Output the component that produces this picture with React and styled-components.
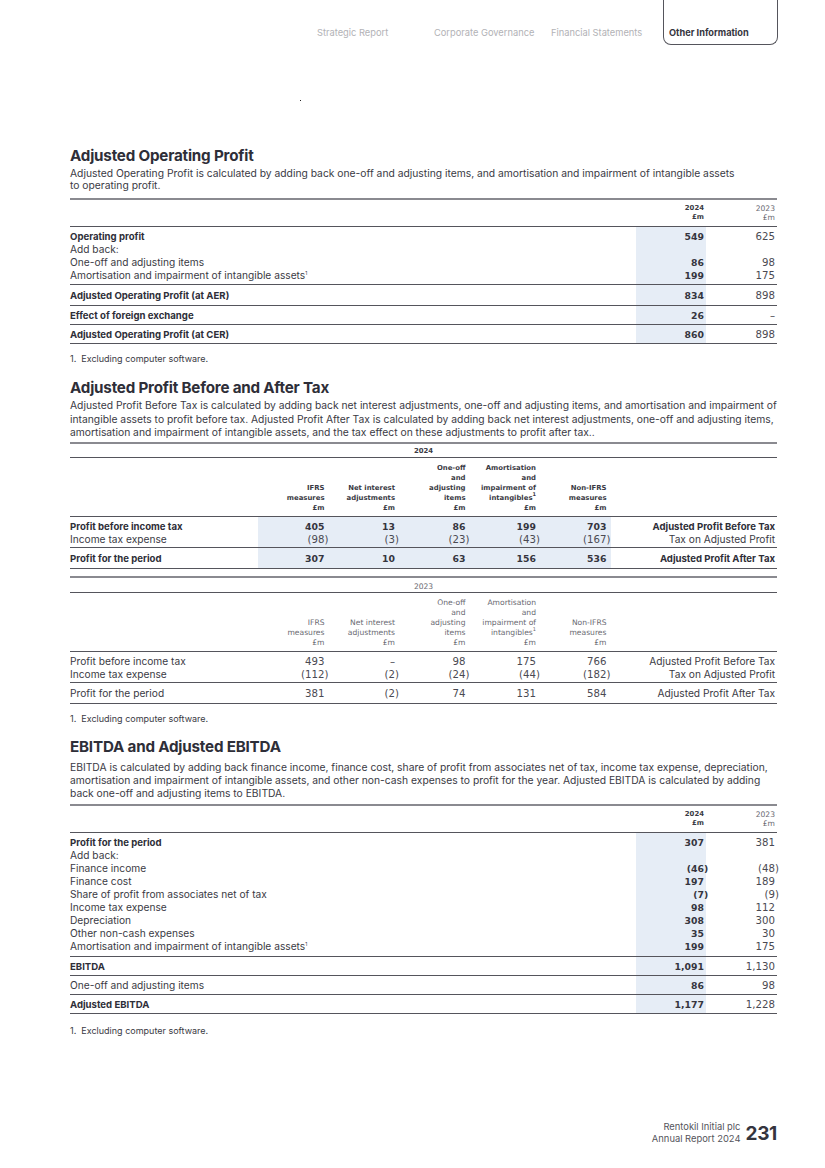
import React from 'react';
import styled, { createGlobalStyle } from 'styled-components';

const GlobalStyle = createGlobalStyle`
  html, body { margin: 0; padding: 0; background: #fff; }
  body { font-family: Inter, "Liberation Sans", sans-serif; color: #3a3a44; }
`;

const Page = styled.div`
  width: 825px;
  height: 1168px;
  box-sizing: border-box;
  padding: 0 48px 0 70px;
  display: flex;
  flex-direction: column;
  overflow: hidden;
`;

const Nav = styled.nav`
  display: flex;
  justify-content: flex-end;
  align-items: flex-end;
  height: 45px;
  margin-right: -1px;
`;

const NavItem = styled.div`
  width: ${(p) => p.$w}px;
  font-size: 9.3px;
  color: #b2b2b6;
  padding-bottom: 7px;
`;

const NavActive = styled.div`
  width: 115px;
  height: 45px;
  box-sizing: border-box;
  border: 1px solid #55555c;
  border-top: none;
  border-radius: 0 0 8px 8px;
  display: flex;
  align-items: flex-end;
  padding: 0 0 6px 5px;
  font-size: 9.2px;
  font-weight: 700;
  color: #35353e;
`;

const Dot = styled.div`
  width: 1px;
  height: 1px;
  background: #222;
  margin: 55px 0 0 230px;
`;

const Section = styled.section`
  margin-top: ${(p) => p.$top}px;
`;

const Title = styled.h2`
  margin: 0;
  font-size: 15.2px;
  line-height: 18px;
  font-weight: 700;
  color: #2e2e38;
  letter-spacing: -0.2px;
`;

const Desc = styled.p`
  margin: ${(p) => p.$mt || 2}px 0 0;
  font-size: 10.3px;
  line-height: ${(p) => p.$lh}px;
  color: #3a3a44;
  max-width: ${(p) => p.$max || 707}px;
`;

const Footnote = styled.p`
  margin: ${(p) => p.$mt || 9}px 0 0;
  font-size: 9px;
  line-height: 10px;
  color: #3a3a44;
`;

const Table = styled.table`
  width: 707px;
  border-collapse: collapse;
  table-layout: fixed;
  margin-top: ${(p) => p.$mt || 0}px;
  border-top: 2px solid #8a8a90;
  border-bottom: 1px solid #55555c;
`;

const Group = styled.tbody`
  border-top: 1px solid #55555c;
  & > tr:first-child > td { padding-top: ${(p) => p.$pt ?? 3}px; }
  & > tr:last-child > td { padding-bottom: ${(p) => p.$pb ?? 2}px; }
`;

const Label = styled.td`
  padding: 0 ${(p) => (p.$right ? 2 : 0)}px 0 0;
  font-size: ${(p) => (p.$bold ? 9.6 : 10.2)}px;
  line-height: 13px;
  height: 13px;
  font-weight: ${(p) => (p.$bold ? 700 : 400)};
  color: ${(p) => (p.$bold ? '#2e2e38' : '#3a3a44')};
  white-space: nowrap;
  text-align: ${(p) => (p.$right ? 'right' : 'left')};
`;

const Val = styled.td`
  padding: 0 ${(p) => p.$pr ?? 2}px 0 0;
  font-family: "DejaVu Sans", Verdana, sans-serif;
  font-size: ${(p) => (p.$bold ? 9.3 : 10.2)}px;
  line-height: 13px;
  height: 13px;
  font-weight: ${(p) => (p.$bold ? 700 : 400)};
  color: ${(p) => (p.$bold ? '#35353e' : '#4a4a52')};
  text-align: right;
  background: ${(p) => (p.$hl ? '#e6edf6' : 'transparent')};
  white-space: nowrap;
`;

const Head = styled.th`
  padding: ${(p) => p.$pad || '4px 2px 4px 0'};
  font-family: "DejaVu Sans", Verdana, sans-serif;
  font-size: ${(p) => (p.$bold ? 6.9 : 7.6)}px;
  line-height: ${(p) => p.$lh || 9}px;
  font-weight: ${(p) => (p.$bold ? 700 : 400)};
  color: ${(p) => (p.$bold ? '#3a3a44' : '#6a6a72')};
  text-align: ${(p) => p.$align || 'right'};
  vertical-align: bottom;
`;

const YearRow = styled.tr`
  border-bottom: 1px solid #55555c;
`;

const Paren = styled.span`
  display: inline-block;
  width: 0;
`;

const Sup = styled.sup`
  font-size: 5px;
  line-height: 0;
  vertical-align: 4px;
`;

const Footer = styled.footer`
  margin-top: auto;
  display: flex;
  justify-content: flex-end;
  align-items: center;
  gap: 5px;
  padding-bottom: 23px;
`;

const FooterText = styled.div`
  font-size: 9.4px;
  line-height: 12px;
  color: #55555c;
  text-align: right;
`;

const PageNo = styled.div`
  font-size: 19px;
  font-weight: 700;
  color: #35353e;
  letter-spacing: -0.3px;
`;

const Num = ({ v }) => {
  if (typeof v === 'string' && v.endsWith(')')) {
    return (
      <>
        {v.slice(0, -1)}
        <Paren>)</Paren>
      </>
    );
  }
  return v;
};

const Cols = ({ widths }) => (
  <colgroup>
    {widths.map((w, i) => (
      <col key={i} style={{ width: w }} />
    ))}
  </colgroup>
);

const TwoYearHead = () => (
  <thead>
    <tr>
      <Head />
      <Head $bold>
        2024
        <br />
        £m
      </Head>
      <Head>
        2023
        <br />
        £m
      </Head>
    </tr>
  </thead>
);

const TwoYearGroup = ({ rows, pt, pb }) => (
  <Group $pt={pt} $pb={pb}>
    {rows.map((r, i) => (
      <tr key={i}>
        <Label $bold={r.bold}>
          {r.label}
          {r.sup && <Sup>1</Sup>}
        </Label>
        <Val $bold $hl>
          <Num v={r.a} />
        </Val>
        <Val>
          <Num v={r.b} />
        </Val>
      </tr>
    ))}
  </Group>
);

const opGroups = [
  [
    { label: 'Operating profit', bold: true, a: '549', b: '625' },
    { label: 'Add back:', a: '', b: '' },
    { label: 'One-off and adjusting items', a: '86', b: '98' },
    { label: 'Amortisation and impairment of intangible assets', sup: true, a: '199', b: '175' },
  ],
  [{ label: 'Adjusted Operating Profit (at AER)', bold: true, a: '834', b: '898' }],
  [{ label: 'Effect of foreign exchange', bold: true, a: '26', b: '–' }],
  [{ label: 'Adjusted Operating Profit (at CER)', bold: true, a: '860', b: '898' }],
];

const ebitdaGroups = [
  [
    { label: 'Profit for the period', bold: true, a: '307', b: '381' },
    { label: 'Add back:', a: '', b: '' },
    { label: 'Finance income', a: '(46)', b: '(48)' },
    { label: 'Finance cost', a: '197', b: '189' },
    { label: 'Share of profit from associates net of tax', a: '(7)', b: '(9)' },
    { label: 'Income tax expense', a: '98', b: '112' },
    { label: 'Depreciation', a: '308', b: '300' },
    { label: 'Other non-cash expenses', a: '35', b: '30' },
    { label: 'Amortisation and impairment of intangible assets', sup: true, a: '199', b: '175' },
  ],
  [{ label: 'EBITDA', bold: true, a: '1,091', b: '1,130' }],
  [{ label: 'One-off and adjusting items', a: '86', b: '98' }],
  [{ label: 'Adjusted EBITDA', bold: true, a: '1,177', b: '1,228' }],
];

const taxHeads = [
  ['IFRS', 'measures', '£m'],
  ['Net interest', 'adjustments', '£m'],
  ['One-off', 'and', 'adjusting', 'items', '£m'],
  ['Amortisation', 'and', 'impairment of', 'intangibles¹', '£m'],
  ['Non-IFRS', 'measures', '£m'],
];

const taxData = {
  2024: [
    [
      { label: 'Profit before income tax', bold: true, v: ['405', '13', '86', '199', '703'], end: 'Adjusted Profit Before Tax', endBold: true },
      { label: 'Income tax expense', v: ['(98)', '(3)', '(23)', '(43)', '(167)'], end: 'Tax on Adjusted Profit' },
    ],
    [{ label: 'Profit for the period', bold: true, v: ['307', '10', '63', '156', '536'], end: 'Adjusted Profit After Tax', endBold: true }],
  ],
  2023: [
    [
      { label: 'Profit before income tax', v: ['493', '–', '98', '175', '766'], end: 'Adjusted Profit Before Tax' },
      { label: 'Income tax expense', v: ['(112)', '(2)', '(24)', '(44)', '(182)'], end: 'Tax on Adjusted Profit' },
    ],
    [{ label: 'Profit for the period', v: ['381', '(2)', '74', '131', '584'], end: 'Adjusted Profit After Tax' }],
  ],
};

const TaxTable = ({ year, current, mt }) => (
  <Table $mt={mt}>
    <Cols widths={[188, 70.5, 70.5, 70.5, 70.5, 70.5, 166.5]} />
    <thead>
      <YearRow>
        <Head colSpan={7} $bold={current} $align="center" $pad={current ? '3px 0 1px' : '4px 0 1px'} $lh={9}>
          {year}
        </Head>
      </YearRow>
      <tr>
        <Head />
        {taxHeads.map((lines, i) => (
          <Head key={i} $bold={current} $lh={10} $pad="5px 4px 3px 0">
            {lines.map((l, j) => (
              <React.Fragment key={j}>
                {l.endsWith('¹') ? (
                  <>
                    {l.slice(0, -1)}
                    <Sup>1</Sup>
                  </>
                ) : (
                  l
                )}
                {j < lines.length - 1 && <br />}
              </React.Fragment>
            ))}
          </Head>
        ))}
        <Head />
      </tr>
    </thead>
    {taxData[year].map((rows, gi) => (
      <Group key={gi} $pt={gi === 0 ? 3 : 4} $pb={gi === 0 ? 1 : 3}>
        {rows.map((r, ri) => (
          <tr key={ri}>
            <Label $bold={r.bold}>{r.label}</Label>
            {r.v.map((v, vi) => (
              <Val key={vi} $bold={r.bold} $hl={current} $pr={4}>
                <Num v={v} />
              </Val>
            ))}
            <Label $bold={r.endBold} $right>
              {r.end}
            </Label>
          </tr>
        ))}
      </Group>
    ))}
  </Table>
);

export default function App() {
  return (
    <>
      <GlobalStyle />
      <Page>
        <Nav>
          <NavItem $w={117}>Strategic Report</NavItem>
          <NavItem $w={117}>Corporate Governance</NavItem>
          <NavItem $w={112}>Financial Statements</NavItem>
          <NavActive>Other Information</NavActive>
        </Nav>
        <Dot />

        <Section $top={46}>
          <Title>Adjusted Operating Profit</Title>
          <Desc $lh={12} $max={670}>
            Adjusted Operating Profit is calculated by adding back one-off and adjusting items, and amortisation and
            impairment of intangible assets to operating profit.
          </Desc>
          <Table $mt={7}>
            <Cols widths={[566, 70, 71]} />
            <TwoYearHead />
            {opGroups.map((g, i) => (
              <TwoYearGroup key={i} rows={g} pt={i === 1 ? 4 : 3} pb={i === 1 ? 3 : 2} />
            ))}
          </Table>
          <Footnote $mt={10}>1.&nbsp;&nbsp;Excluding computer software.</Footnote>
        </Section>

        <Section $top={15}>
          <Title>Adjusted Profit Before and After Tax</Title>
          <Desc $lh={13.6} $mt={2}>
            Adjusted Profit Before Tax is calculated by adding back net interest adjustments, one-off and adjusting
            items, and amortisation and impairment of intangible assets to profit before tax. Adjusted Profit After Tax
            is calculated by adding back net interest adjustments, one-off and adjusting items, amortisation and
            impairment of intangible assets, and the tax effect on these adjustments to profit after tax..
          </Desc>
          <TaxTable year={2024} current mt={2} />
          <TaxTable year={2023} mt={7} />
          <Footnote $mt={10}>1.&nbsp;&nbsp;Excluding computer software.</Footnote>
        </Section>

        <Section $top={14}>
          <Title>EBITDA and Adjusted EBITDA</Title>
          <Desc $lh={13} $mt={5}>
            EBITDA is calculated by adding back finance income, finance cost, share of profit from associates net of
            tax, income tax expense, depreciation, amortisation and impairment of intangible assets, and other non-cash
            expenses to profit for the year. Adjusted EBITDA is calculated by adding back one-off and adjusting items to
            EBITDA.
          </Desc>
          <Table $mt={4}>
            <Cols widths={[566, 70, 71]} />
            <TwoYearHead />
            {ebitdaGroups.map((g, i) => (
              <TwoYearGroup key={i} rows={g} pt={3} pb={i === 0 ? 3 : 2} />
            ))}
          </Table>
          <Footnote $mt={12}>1.&nbsp;&nbsp;Excluding computer software.</Footnote>
        </Section>

        <Footer>
          <FooterText>
            Rentokil Initial plc
            <br />
            Annual Report 2024
          </FooterText>
          <PageNo>231</PageNo>
        </Footer>
      </Page>
    </>
  );
}
